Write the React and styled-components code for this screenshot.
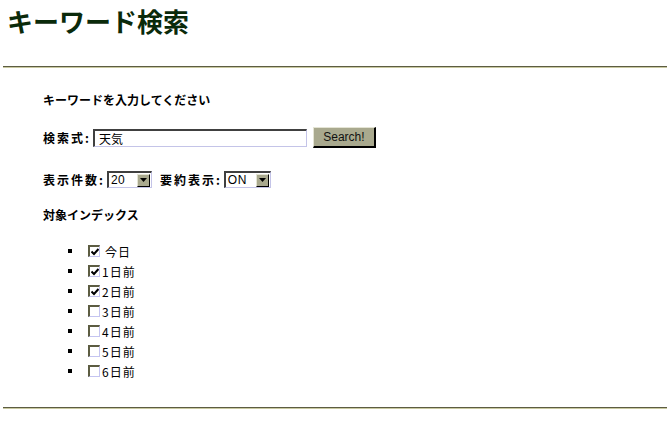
import styled, { createGlobalStyle } from "styled-components";

const GlobalStyle = createGlobalStyle`
  html, body {
    margin: 0;
    padding: 0;
    background: #ffffff;
  }
  body {
    font-family: "Liberation Sans", "Noto Sans CJK JP", sans-serif;
    color: #000000;
  }
`;

const Page = styled.div`
  width: 667px;
  height: 423px;
  overflow: hidden;
`;

const Title = styled.h1`
  margin: 0;
  padding: 6px 7px 0;
  font-size: 26px;
  line-height: 30px;
  font-weight: bold;
  color: #0a2a0a;
  font-family: "Noto Sans CJK JP", sans-serif;
`;

const Rule = styled.div`
  margin: ${(p) => p.$top}px 0 0 3px;
  border-top: 1px solid #5c5c42;
  border-bottom: 1px solid #c9c9a0;
`;

const Content = styled.div`
  padding-left: 43px;
  display: flex;
  flex-direction: column;
`;

const Heading = styled.div`
  margin-top: ${(p) => p.$top}px;
  font-size: 12px;
  line-height: 16px;
  font-weight: bold;
  font-family: "Noto Sans CJK JP", sans-serif;
`;

const Row = styled.div`
  margin-top: ${(p) => p.$top}px;
  display: flex;
  align-items: center;
  height: ${(p) => p.$h}px;
`;

const Label = styled.span`
  font-size: 12px;
  font-weight: bold;
  font-family: "Noto Sans CJK JP", sans-serif;
  letter-spacing: 2px;
  margin-right: ${(p) => p.$gap || 2}px;
  margin-left: ${(p) => p.$left || 0}px;
`;

const TextBox = styled.div`
  box-sizing: border-box;
  width: 214px;
  height: 18px;
  border-top: 2px solid #404040;
  border-left: 2px solid #404040;
  border-right: 1px solid #c4c4e8;
  border-bottom: 1px solid #c4c4e8;
  padding-left: 4px;
  font-size: 12px;
  line-height: 15px;
  font-family: "Noto Sans CJK JP", sans-serif;
`;

const Button = styled.div`
  box-sizing: border-box;
  margin-left: 6px;
  width: 63px;
  height: 21px;
  background: #a9a98e;
  border-top: 1px solid #e4e4d4;
  border-left: 1px solid #e4e4d4;
  border-right: 2px solid #000000;
  border-bottom: 2px solid #000000;
  font-size: 12px;
  display: flex;
  align-items: center;
  justify-content: center;
  color: #111;
`;

const Select = styled.div`
  box-sizing: border-box;
  width: ${(p) => p.$w}px;
  height: 17px;
  display: flex;
  align-items: center;
  justify-content: space-between;
  border-top: 2px solid #404040;
  border-left: 2px solid #404040;
  border-right: 1px solid #c4c4e8;
  border-bottom: 1px solid #c4c4e8;
  padding: 0 1px 0 2px;
  font-size: 12px;
  letter-spacing: 0.5px;
`;

const Arrow = styled.span`
  box-sizing: border-box;
  width: 13px;
  height: 13px;
  background: #a9a98e;
  border-top: 1px solid #e4e4d4;
  border-left: 1px solid #e4e4d4;
  border-right: 1px solid #000;
  border-bottom: 1px solid #000;
  display: flex;
  align-items: center;
  justify-content: center;
`;

const List = styled.ul`
  margin: 18px 0 0;
  padding: 0 0 0 25px;
  list-style: none;
`;

const Item = styled.li`
  height: 20px;
  display: flex;
  align-items: center;
  font-size: 12px;
  font-family: "Noto Sans CJK JP", sans-serif;
  letter-spacing: 1px;
`;

const Bullet = styled.span`
  width: 4px;
  height: 4px;
  background: #000;
  margin-right: 16px;
`;

const Box = styled.span`
  box-sizing: border-box;
  width: 12px;
  height: 12px;
  margin-right: ${(p) => p.$gap}px;
  border-top: 2px solid #5c5c42;
  border-left: 2px solid #5c5c42;
  border-right: 1px solid #c4c4f0;
  border-bottom: 1px solid #c4c4f0;
  background: #fff;
  display: flex;
  align-items: center;
  justify-content: center;
`;

const days = [
  { label: "今日", on: true, gap: 5 },
  { label: "1日前", on: true, gap: 2 },
  { label: "2日前", on: true, gap: 2 },
  { label: "3日前", on: false, gap: 2 },
  { label: "4日前", on: false, gap: 2 },
  { label: "5日前", on: false, gap: 2 },
  { label: "6日前", on: false, gap: 2 },
];

function Check() {
  return (
    <svg width="8" height="8" viewBox="0 0 8 8">
      <path d="M0.5 3.5 L3 6 L7.5 1" stroke="#000" strokeWidth="2" fill="none" />
    </svg>
  );
}

function Dropdown({ value, w }) {
  return (
    <Select $w={w}>
      <span>{value}</span>
      <Arrow>
        <svg width="7" height="4" viewBox="0 0 7 4">
          <path d="M0 0 H7 L3.5 4 Z" fill="#000" />
        </svg>
      </Arrow>
    </Select>
  );
}

export default function App() {
  return (
    <Page>
      <GlobalStyle />
      <Title>キーワード検索</Title>
      <Rule $top={30} />
      <Content>
        <Heading $top={24}>キーワードを入力してください</Heading>
        <Row $top={19} $h={21}>
          <Label>検索式:</Label>
          <TextBox>天気</TextBox>
          <Button>Search!</Button>
        </Row>
        <Row $top={23} $h={17}>
          <Label>表示件数:</Label>
          <Dropdown value="20" w={45} />
          <Label $left={8}>要約表示:</Label>
          <Dropdown value="ON" w={47} />
        </Row>
        <Heading $top={19}>対象インデックス</Heading>
        <List>
          {days.map((d) => (
            <Item key={d.label}>
              <Bullet />
              <Box $gap={d.gap}>{d.on && <Check />}</Box>
              {d.label}
            </Item>
          ))}
        </List>
      </Content>
      <Rule $top={26} />
    </Page>
  );
}
